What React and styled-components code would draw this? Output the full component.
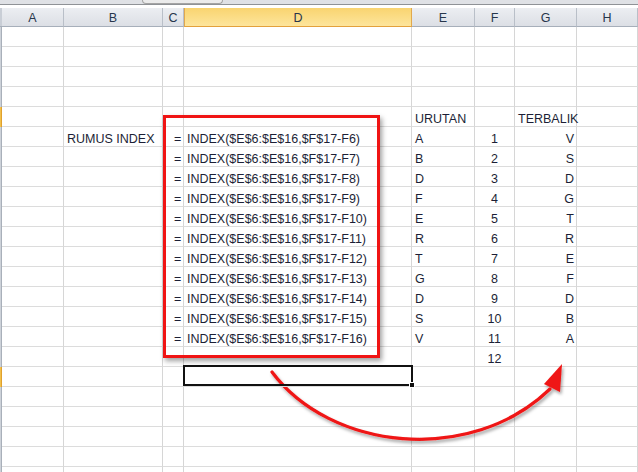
import React from "react";
import styled, { createGlobalStyle } from "styled-components";

const GlobalStyle = createGlobalStyle`
  html, body {
    margin: 0;
    padding: 0;
    background: #fff;
    overflow: hidden;
  }
`;

const COLS = "2px 62px 99px 21px 228px 63px 40px 62px 61px";

const Page = styled.div`
  position: relative;
  width: 638px;
  height: 472px;
  overflow: hidden;
  font-family: "Liberation Sans", Arial, sans-serif;
  font-size: 12.5px;
  color: #1c1f36;
`;

const TopBar = styled.div`
  display: flex;
  height: 4px;
  background: #dfe1e5;
  border-bottom: 1px solid #8f9296;
`;

const Tab = styled.div`
  margin-left: 142px;
  width: 81px;
  height: 4px;
  box-sizing: border-box;
  background: #ebebeb;
  border: 1px solid #a4a4a4;
  border-top: none;
  border-radius: 0 0 7px 7px;
`;

const Gap = styled.div`
  height: 3px;
  background: #fff;
`;

const HeaderRow = styled.div`
  display: grid;
  grid-template-columns: ${COLS};
  height: 19px;
`;

const ColHead = styled.div`
  box-sizing: border-box;
  display: flex;
  align-items: center;
  justify-content: center;
  color: #27364c;
  background: ${({ $active }) =>
    $active
      ? "linear-gradient(180deg, #f9d470 0%, #fde59c 100%)"
      : "linear-gradient(180deg, #eceef2 0%, #dcdfe5 100%)"};
  border-right: 1px solid ${({ $active }) => ($active ? "#e1a94e" : "#b9bfc8")};
  border-left: ${({ $active }) => ($active ? "1px solid #e1a94e" : "none")};
  border-bottom: 1px solid ${({ $active }) => ($active ? "#e3a13c" : "#a7afba")};
  padding-top: 1px;
`;

const Corner = styled.div`
  background: #c9ced6;
  border-bottom: 1px solid #a7afba;
`;

const Row = styled.div`
  display: grid;
  grid-template-columns: ${COLS};
  height: 20px;
`;

const RowHead = styled.div`
  background: ${({ $active }) => ($active ? "#f2c04b" : "#cdd2d9")};
  border-right: 1px solid ${({ $active }) => ($active ? "#e0a12e" : "#a9b0ba")};
`;

const Cell = styled.div`
  position: relative;
  box-sizing: border-box;
  height: 20px;
  border-right: 1px solid #d6d6d6;
  border-bottom: 1px solid #dcdcdc;
  padding: 5px ${({ $padR }) => $padR ?? 3}px 0 ${({ $padL }) => $padL ?? 3}px;
  line-height: 15px;
  white-space: nowrap;
  text-align: ${({ $align }) => $align || "left"};
  z-index: ${({ $selected }) => ($selected ? 2 : 0)};
`;

const Selection = styled.div`
  position: absolute;
  left: -1px;
  top: -2px;
  right: -2px;
  bottom: 0px;
  border: 2px solid #111;
  pointer-events: none;

  &::after {
    content: "";
    position: absolute;
    right: -4px;
    bottom: -4px;
    width: 4px;
    height: 4px;
    background: #111;
    border: 1px solid #fff;
  }
`;

const RedBox = styled.div`
  position: absolute;
  left: 163px;
  top: 115px;
  width: 217px;
  height: 243px;
  box-sizing: border-box;
  border: 3px solid #f01414;
  box-shadow: 2px 3px 5px rgba(0, 0, 0, 0.38);
  pointer-events: none;
`;

const ArrowLayer = styled.svg`
  position: absolute;
  left: 0;
  top: 0;
  pointer-events: none;
`;

const urutan = ["A", "B", "D", "F", "E", "R", "T", "G", "D", "S", "V"];
const terbalik = ["V", "S", "D", "G", "T", "R", "E", "F", "D", "B", "A"];

function buildRows() {
  const rows = [];
  for (let r = 1; r <= 23; r++) {
    const cells = ["", "", "", "", "", "", "", ""];
    if (r === 5) {
      cells[4] = "URUTAN";
      cells[6] = "TERBALIK";
    }
    if (r >= 6 && r <= 16) {
      const i = r - 6;
      if (r === 6) cells[1] = "RUMUS INDEX";
      cells[2] = "=";
      cells[3] = `INDEX($E$6:$E$16,$F$17-F${r})`;
      cells[4] = urutan[i];
      cells[5] = String(i + 1);
      cells[6] = terbalik[i];
    }
    if (r === 17) cells[5] = "12";
    rows.push({ r, cells });
  }
  return rows;
}

const cellProps = [
  {},
  {},
  { $padL: 11, $padR: 0 },
  {},
  {},
  { $align: "center", $padL: 0, $padR: 0 },
  {},
  {},
];

function App() {
  const rows = buildRows();
  const heads = ["A", "B", "C", "D", "E", "F", "G", "H"];
  return (
    <Page>
      <GlobalStyle />
      <TopBar>
        <Tab />
      </TopBar>
      <Gap />
      <HeaderRow>
        <Corner />
        {heads.map((h) => (
          <ColHead key={h} $active={h === "D"}>
            {h}
          </ColHead>
        ))}
      </HeaderRow>
      {rows.map(({ r, cells }) => (
        <Row key={r}>
          <RowHead $active={r === 5 || r === 18} />
          {cells.map((v, c) => {
            const selected = r === 18 && c === 3;
            const extra =
              c === 6 && r >= 6 && r <= 16
                ? { $align: "right", $padR: 2 }
                : cellProps[c];
            return (
              <Cell key={c} {...extra} $selected={selected}>
                {v}
                {selected && <Selection />}
              </Cell>
            );
          })}
        </Row>
      ))}
      <RedBox />
      <ArrowLayer width="638" height="472" viewBox="0 0 638 472">
        <defs>
          <filter id="shadow" x="-10%" y="-10%" width="130%" height="140%">
            <feDropShadow dx="1.5" dy="2.5" stdDeviation="1.6" floodColor="#000" floodOpacity="0.35" />
          </filter>
        </defs>
        <g filter="url(#shadow)">
          <path
            d="M272 372 C 330 450, 470 466, 550 389"
            fill="none"
            stroke="#ef1414"
            strokeWidth="3.2"
            strokeLinecap="round"
          />
          <polygon points="562,364 544,384 560,392" fill="#ef1414" />
        </g>
      </ArrowLayer>
    </Page>
  );
}

export default App;
